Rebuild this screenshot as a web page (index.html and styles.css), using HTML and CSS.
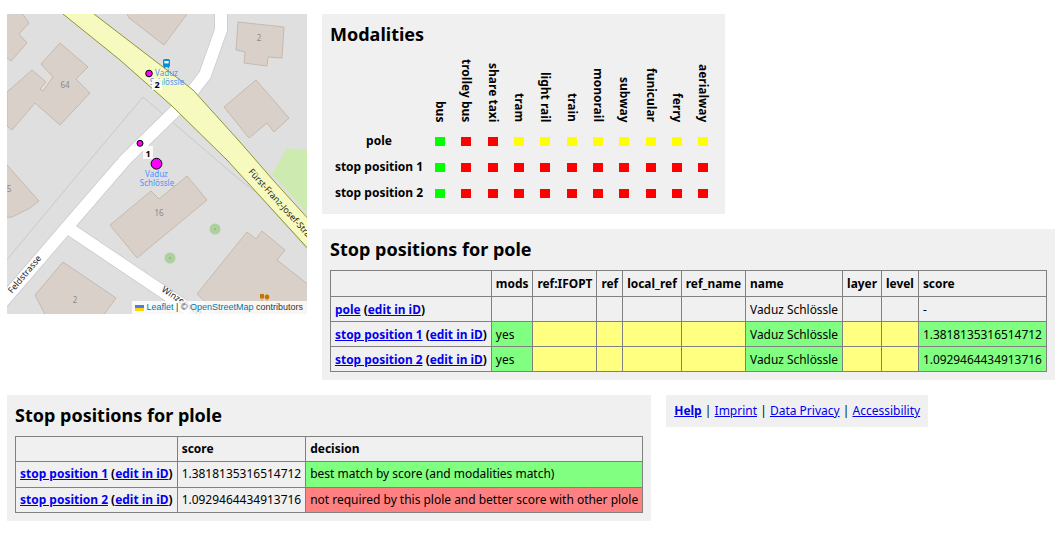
FILE: index.html
```html
<!DOCTYPE html>
<html lang="en">
<head>
<meta charset="utf-8">
<title>Stop positions</title>
<link rel="stylesheet" href="styles.css">
</head>
<body>
<div class="top">
  <div class="map">
    <svg class="map-svg" viewBox="7 14 300 300" width="300" height="300" xmlns="http://www.w3.org/2000/svg">
      <rect class="land" x="7" y="14" width="300" height="300"/>
      <polygon class="grass" points="287,148 310,151 310,216 272,174"/>
      <polyline class="parcel" points="0,268 90,160 143,97 240,180 257,193 310,252"/>
      <g class="bld">
        <polygon points="60,43 88,67 76,79 90,93 60,125 35,103 12,130 7,126 7,92 32,70 46,82 40,89 43,91 53,77 41,64"/>
        <polygon points="0,10 20,10 29,23 19,34 27,43 11,61 0,52"/>
        <polygon points="125,10 190,10 164,45 129,18"/>
        <polygon points="238,22 284,27 282,58 268,57 267,66 244,63 245,52 236,50"/>
        <polygon points="256,80 289,118 274,132 267,123 249,138 224,107"/>
        <polygon points="187,176 207,200 137,258 110,225 151,191 159,199"/>
        <polygon points="0,158 7,165 39,201 30,208 12,217 0,218"/>
        <polygon points="63,262 116,298 100,320 48,320 35,295"/>
        <polygon points="247,232 256,239 262,231 285,250 277,260 310,286 310,320 225,320 197,294"/>
      </g>
      <g class="casing">
        <polyline points="0,305 68,226 125,160 176,110 192,92 205,75 221,30 221,0"/>
        <polyline points="68,228 190,310"/>
      </g>
      <g class="road">
        <polyline points="0,305 68,226 125,160 176,110 192,92 205,75 221,30 221,0"/>
        <polyline points="68,228 190,310"/>
      </g>
      <polygon class="major" points="50,0 80,0 94,14 193,90 240,142 273,180 312,223 312,253 227,160 172,106 120,60 63,14"/>
      <circle class="tree" cx="215" cy="229" r="5.5"/>
      <circle class="tree" cx="170" cy="258" r="5.5"/>
      <circle class="tree-dot" cx="215" cy="229" r="1"/>
      <circle class="tree-dot" cx="170" cy="258" r="1"/>
      <text class="hnum" x="65" y="88">64</text>
      <text class="hnum" x="259" y="41">2</text>
      <text class="hnum" x="159" y="216">16</text>
      <text class="hnum" x="9" y="192">5</text>
      <text class="hnum" x="75" y="303">2</text>
      <text class="rname" transform="translate(248,172) rotate(48)">Fürst-Franz-Josef-Straße</text>
      <text class="rname" transform="translate(12,294) rotate(-50)">Feldstrasse</text>
      <text class="rname" transform="translate(161,291) rotate(33)">Winzerweg</text>
      <g class="bus">
        <rect x="163" y="59" width="7" height="8" rx="1.5"/>
        <rect class="bus-win" x="164.4" y="61" width="4.2" height="2.4"/>
        <rect x="164" y="66.5" width="1.4" height="1.6"/>
        <rect x="167.6" y="66.5" width="1.4" height="1.6"/>
      </g>
      <text class="stop" x="166.5" y="76">Vaduz</text>
      <text class="stop" x="167" y="85">Schlössle</text>
      <text class="stop" x="156.5" y="177">Vaduz</text>
      <text class="stop" x="157" y="186">Schlössle</text>
      <rect class="tag" x="152" y="79" width="10" height="11"/>
      <rect class="tag" x="143" y="146" width="10" height="13"/>
      <text class="num" x="157" y="87.5">2</text>
      <text class="num" x="148" y="157">1</text>
      <circle class="pin" cx="149" cy="73.5" r="3.3"/>
      <circle class="pin" cx="140" cy="143.3" r="3"/>
      <circle class="pin" cx="156.5" cy="163.7" r="5.4"/>
      <rect class="amen" x="260" y="294" width="4" height="4.5"/>
      <circle class="amen" cx="267" cy="297" r="2.4"/>
      <path class="amen-stalk" d="M262 298V303M267 299V303"/>
    </svg>
    <div class="attrib"><svg class="flag" viewBox="0 0 12 8" width="9" height="6" xmlns="http://www.w3.org/2000/svg"><rect class="flag-b" width="12" height="4"/><rect class="flag-y" y="4" width="12" height="4"/></svg> <a class="attrib-link">Leaflet</a> <span class="sep">|</span> © <a class="attrib-link">OpenStreetMap</a> contributors</div>
  </div>
  <div class="right">
    <section class="box">
      <h2>Modalities</h2>
      <table class="mod">
        <tr class="mod-head"><td></td><th><span>bus</span></th><th><span>trolley bus</span></th><th><span>share taxi</span></th><th><span>tram</span></th><th><span>light rail</span></th><th><span>train</span></th><th><span>monorail</span></th><th><span>subway</span></th><th><span>funicular</span></th><th><span>ferry</span></th><th><span>aerialway</span></th></tr>
        <tr><th class="rowh">pole</th><td><i class="sq g"></i></td><td><i class="sq r"></i></td><td><i class="sq r"></i></td><td><i class="sq y"></i></td><td><i class="sq y"></i></td><td><i class="sq y"></i></td><td><i class="sq y"></i></td><td><i class="sq y"></i></td><td><i class="sq y"></i></td><td><i class="sq y"></i></td><td><i class="sq y"></i></td></tr>
        <tr><th class="rowh">stop position 1</th><td><i class="sq g"></i></td><td><i class="sq r"></i></td><td><i class="sq r"></i></td><td><i class="sq r"></i></td><td><i class="sq r"></i></td><td><i class="sq r"></i></td><td><i class="sq r"></i></td><td><i class="sq r"></i></td><td><i class="sq r"></i></td><td><i class="sq r"></i></td><td><i class="sq r"></i></td></tr>
        <tr><th class="rowh">stop position 2</th><td><i class="sq g"></i></td><td><i class="sq r"></i></td><td><i class="sq r"></i></td><td><i class="sq r"></i></td><td><i class="sq r"></i></td><td><i class="sq r"></i></td><td><i class="sq r"></i></td><td><i class="sq r"></i></td><td><i class="sq r"></i></td><td><i class="sq r"></i></td><td><i class="sq r"></i></td></tr>
      </table>
    </section>
    <section class="box">
      <h2>Stop positions for pole</h2>
      <table class="grid">
        <tr><th></th><th>mods</th><th>ref:IFOPT</th><th>ref</th><th>local_ref</th><th>ref_name</th><th>name</th><th>layer</th><th>level</th><th>score</th></tr>
        <tr><td class="b"><a href="#">pole</a> (<a href="#">edit in iD</a>)</td><td></td><td></td><td></td><td></td><td></td><td>Vaduz Schlössle</td><td></td><td></td><td>-</td></tr>
        <tr><td class="b"><a href="#">stop position 1</a> (<a href="#">edit in iD</a>)</td><td class="ok">yes</td><td class="warn"></td><td class="warn"></td><td class="warn"></td><td class="warn"></td><td class="ok">Vaduz Schlössle</td><td class="warn"></td><td class="warn"></td><td class="ok">1.3818135316514712</td></tr>
        <tr><td class="b"><a href="#">stop position 2</a> (<a href="#">edit in iD</a>)</td><td class="ok">yes</td><td class="warn"></td><td class="warn"></td><td class="warn"></td><td class="warn"></td><td class="ok">Vaduz Schlössle</td><td class="warn"></td><td class="warn"></td><td class="ok">1.0929464434913716</td></tr>
      </table>
    </section>
  </div>
</div>
<div class="bottom">
  <section class="box">
    <h2>Stop positions for plole</h2>
    <table class="grid grid-wide">
      <tr><th></th><th>score</th><th>decision</th></tr>
      <tr><td class="b"><a href="#">stop position 1</a> (<a href="#">edit in iD</a>)</td><td>1.3818135316514712</td><td class="ok">best match by score (and modalities match)</td></tr>
      <tr><td class="b"><a href="#">stop position 2</a> (<a href="#">edit in iD</a>)</td><td>1.0929464434913716</td><td class="bad">not required by this plole and better score with other plole</td></tr>
    </table>
  </section>
  <nav class="box foot"><a class="b" href="#">Help</a> | <a href="#">Imprint</a> | <a href="#">Data Privacy</a> | <a href="#">Accessibility</a></nav>
</div>
</body>
</html>
```
FILE: styles.css
```css
body {
  margin: 14px 0 0 7px;
  font-family: "Noto Sans", sans-serif;
  font-size: 12px;
  color: #000;
  background: #fff;
}
a { color: #00e; }
.top { display: flex; gap: 15px; align-items: flex-start; }
.right { display: flex; flex-direction: column; gap: 15px; align-items: flex-start; }
.bottom { display: flex; gap: 15px; align-items: flex-start; margin-top: 15px; }
.box { background: #f0f0f0; padding: 8px; }
.box h2 { margin: 0 0 8px; font-size: 18px; font-weight: 700; line-height: 25px; }
.foot { padding: 7px 8px; line-height: 18px; }

/* map */
.map { position: relative; width: 300px; height: 300px; overflow: hidden; flex: none; }
.map-svg { display: block; }
.land { fill: #dfdfdf; }
.grass { fill: #cdebb0; }
.parcel { fill: none; stroke: #cbc8c8; stroke-width: 1; }
.bld polygon { fill: #d9d0c9; stroke: #c6b9ae; stroke-width: 1; }
.casing polyline { fill: none; stroke: #c9c9c9; stroke-width: 13.5; }
.road polyline { fill: none; stroke: #fff; stroke-width: 12; }
.major { fill: #f7fabf; stroke: #8d9435; stroke-width: 1; }
.tree { fill: #add19e; }
.tree-dot { fill: #8fb685; }
.hnum { font-family: "Noto Sans", sans-serif; font-size: 8px; fill: #8a8a8a; text-anchor: middle; }
.rname { font-family: "Noto Sans", sans-serif; font-size: 8.8px; fill: #222; }
.stop { font-family: "Noto Sans", sans-serif; font-size: 8px; fill: #4d94ff; text-anchor: middle; }
.bus rect { fill: #0092da; }
.bus .bus-win { fill: #fff; }
.tag { fill: #fff; fill-opacity: .85; }
.num { font-family: "Noto Sans", sans-serif; font-size: 9px; font-weight: 700; text-anchor: middle; }
.pin { fill: #f0f; stroke: #000; stroke-width: 1; }
.amen { fill: #c77400; }
.amen-stalk { stroke: #dba24f; stroke-width: 1; fill: none; }
.attrib { position: absolute; right: 0; bottom: 0; padding: 0 4px 0 3px; background: rgba(255,255,255,.8); font: 9px/13px "Liberation Sans", sans-serif; color: #333; white-space: nowrap; }
.attrib-link { color: #0078a8; }
.flag { vertical-align: -0.5px; }
.flag-b { fill: #4c7be1; }
.flag-y { fill: #ffd500; }
.sep { color: #333; }

/* modalities */
.mod { border-spacing: 2px; margin-top: 10px; }
.mod td, .mod th { padding: 0; }
.mod-head th { width: 24.3px; vertical-align: bottom; text-align: center; font-weight: 700; }
.mod-head span { display: inline-block; writing-mode: vertical-rl; line-height: 24px; white-space: nowrap; }
.mod td { height: 24px; text-align: center; }
.rowh { width: 94px; text-align: center; font-weight: 700; white-space: nowrap; }
.sq { display: inline-block; width: 10px; height: 9px; vertical-align: middle; }
.sq.g { background: #0f0; }
.sq.r { background: #f00; }
.sq.y { background: #ff0; }

/* data tables */
.grid { border-collapse: collapse; font-size: 11.92px; }
.grid-wide { font-size: 11.98px; }
.grid th, .grid td { border: 1px solid #808080; padding: 4px; text-align: left; white-space: nowrap; line-height: 16.2px; }
.grid th { font-weight: 700; }
.b { font-weight: 700; }
.ok { background: #80ff80; }
.warn { background: #ffff80; }
.bad { background: #ff8080; }
```
